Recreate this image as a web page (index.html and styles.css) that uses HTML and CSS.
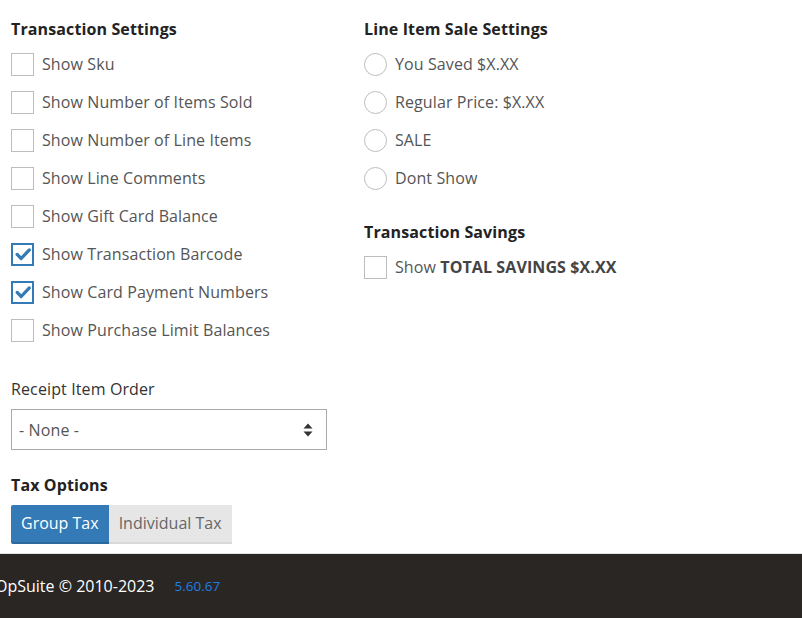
FILE: index.html
```html
<!DOCTYPE html>
<html>
<head>
<meta charset="utf-8">
<link rel="stylesheet" href="styles.css">
</head>
<body>
<div class="page">
  <div class="cols">
    <div class="col">
      <h3 class="heading">Transaction Settings</h3>
      <div class="opts">
        <div class="opt"><span class="box"></span><span class="lbl">Show Sku</span></div>
        <div class="opt"><span class="box"></span><span class="lbl">Show Number of Items Sold</span></div>
        <div class="opt"><span class="box"></span><span class="lbl">Show Number of Line Items</span></div>
        <div class="opt"><span class="box"></span><span class="lbl">Show Line Comments</span></div>
        <div class="opt"><span class="box"></span><span class="lbl">Show Gift Card Balance</span></div>
        <div class="opt"><span class="box checked"><svg viewBox="0 0 20 20" width="18" height="18"><path d="M3.5 10.5 L8 15 L17 5.5" fill="none" stroke="#337ab7" stroke-width="3.6" stroke-linecap="round" stroke-linejoin="round"/></svg></span><span class="lbl">Show Transaction Barcode</span></div>
        <div class="opt"><span class="box checked"><svg viewBox="0 0 20 20" width="18" height="18"><path d="M3.5 10.5 L8 15 L17 5.5" fill="none" stroke="#337ab7" stroke-width="3.6" stroke-linecap="round" stroke-linejoin="round"/></svg></span><span class="lbl">Show Card Payment Numbers</span></div>
        <div class="opt"><span class="box"></span><span class="lbl">Show Purchase Limit Balances</span></div>
      </div>
      <label class="field-label">Receipt Item Order</label>
      <div class="select">
        <span>- None -</span>
        <svg class="arrows" viewBox="0 0 10 14" width="10" height="14"><path d="M5 0.5 L9.5 5.5 L0.5 5.5 Z M5 13.5 L9.5 8.5 L0.5 8.5 Z" fill="#333"/></svg>
      </div>
      <h3 class="heading tax">Tax Options</h3>
      <div class="btn-group">
        <span class="btn active">Group Tax</span>
        <span class="btn">Individual Tax</span>
      </div>
    </div>
    <div class="col">
      <h3 class="heading">Line Item Sale Settings</h3>
      <div class="opts">
        <div class="opt"><span class="radio"></span><span class="lbl">You Saved $X.XX</span></div>
        <div class="opt"><span class="radio"></span><span class="lbl">Regular Price: $X.XX</span></div>
        <div class="opt"><span class="radio"></span><span class="lbl">SALE</span></div>
        <div class="opt"><span class="radio"></span><span class="lbl">Dont Show</span></div>
      </div>
      <h3 class="heading savings">Transaction Savings</h3>
      <div class="opts">
        <div class="opt"><span class="box"></span><span class="lbl">Show <b>TOTAL SAVINGS $X.XX</b></span></div>
      </div>
    </div>
  </div>
</div>
<footer class="footer">
  <span class="copy">OpSuite © 2010-2023</span>
  <span class="ver">5.60.67</span>
</footer>
</body>
</html>
```
FILE: styles.css
```css
html, body {
  margin: 0;
  padding: 0;
  background: #fff;
  font-family: "Open Sans", "Liberation Sans", sans-serif;
  font-size: 16px;
  color: #333;
  letter-spacing: 0.12px;
}
.page {
  padding: 18px 0 11px 11px;
}
.cols {
  display: grid;
  grid-template-columns: 316px 1fr;
  column-gap: 37px;
}
.heading {
  margin: 0;
  font-size: 16px;
  line-height: 22px;
  font-weight: 700;
  color: #222;
}
.heading.savings {
  margin-top: 32px;
}
.heading.tax {
  margin-top: 24px;
}
.opts {
  display: flex;
  flex-direction: column;
  gap: 16px;
  margin-top: 13px;
}
.opt {
  display: flex;
  align-items: center;
  height: 22px;
  gap: 8px;
}
.box {
  width: 21px;
  height: 21px;
  border: 1px solid #bdbdbd;
  box-sizing: content-box;
  display: flex;
  align-items: center;
  justify-content: center;
  flex: none;
}
.box.checked {
  border: 2px solid #337ab7;
  width: 19px;
  height: 19px;
}
.radio {
  width: 21px;
  height: 21px;
  border: 1px solid #bdbdbd;
  border-radius: 50%;
  flex: none;
}
.lbl {
  color: #555;
  line-height: 22px;
  white-space: nowrap;
  letter-spacing: 0.1px;
}
.lbl b {
  color: #444;
}
.field-label {
  display: block;
  margin-top: 37px;
  line-height: 22px;
  color: #333;
}
.select {
  margin-top: 9px;
  height: 41px;
  box-sizing: border-box;
  border: 1px solid #aaa;
  display: flex;
  align-items: center;
  justify-content: space-between;
  padding: 0 13px 0 7px;
  color: #555;
}
.arrows {
  display: block;
}
.btn-group {
  display: flex;
  margin-top: 9px;
}
.btn {
  height: 37px;
  line-height: 37px;
  padding: 0 10px;
  background: #e6e6e6;
  color: #666;
  box-shadow: 0 2px 0 #d8d8d8;
  letter-spacing: 0;
}
.btn.active {
  background: #337ab7;
  color: #fff;
  box-shadow: 0 2px 0 #2b689c;
  border-radius: 2px 0 0 2px;
}
.footer {
  background: #2a2624;
  border-top: 1px solid #e2e2e2;
  height: 64px;
  display: flex;
  align-items: center;
  gap: 20px;
  margin-left: -5px;
  letter-spacing: 0;
}
.copy {
  color: #fff;
  font-size: 16px;
}
.ver {
  color: #1f7fe6;
  font-size: 13.5px;
}
```
